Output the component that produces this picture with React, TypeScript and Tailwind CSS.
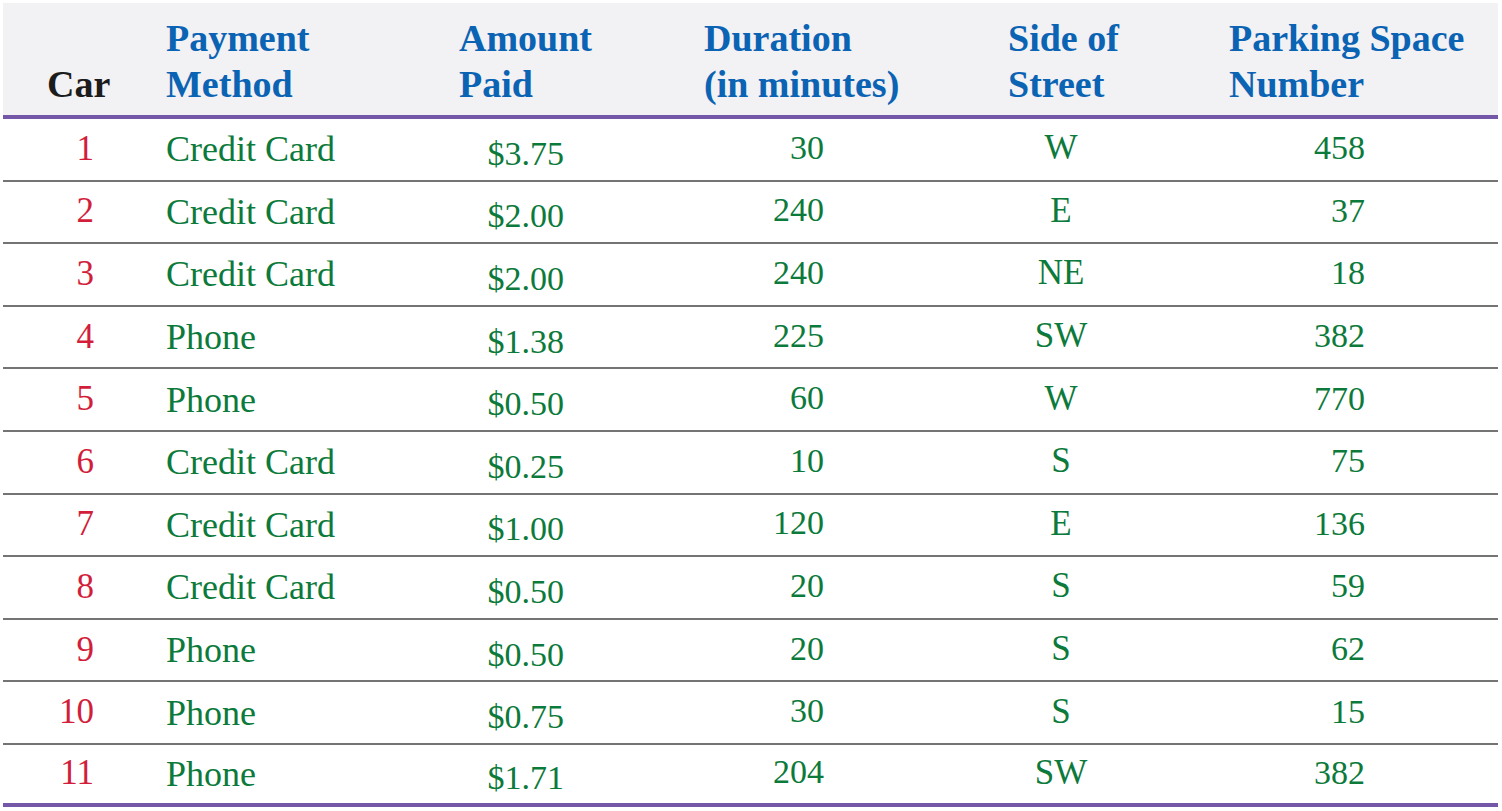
const rows = [
  { car: '1', method: 'Credit Card', amount: '$3.75', duration: '30', side: 'W', space: '458' },
  { car: '2', method: 'Credit Card', amount: '$2.00', duration: '240', side: 'E', space: '37' },
  { car: '3', method: 'Credit Card', amount: '$2.00', duration: '240', side: 'NE', space: '18' },
  { car: '4', method: 'Phone', amount: '$1.38', duration: '225', side: 'SW', space: '382' },
  { car: '5', method: 'Phone', amount: '$0.50', duration: '60', side: 'W', space: '770' },
  { car: '6', method: 'Credit Card', amount: '$0.25', duration: '10', side: 'S', space: '75' },
  { car: '7', method: 'Credit Card', amount: '$1.00', duration: '120', side: 'E', space: '136' },
  { car: '8', method: 'Credit Card', amount: '$0.50', duration: '20', side: 'S', space: '59' },
  { car: '9', method: 'Phone', amount: '$0.50', duration: '20', side: 'S', space: '62' },
  { car: '10', method: 'Phone', amount: '$0.75', duration: '30', side: 'S', space: '15' },
  { car: '11', method: 'Phone', amount: '$1.71', duration: '204', side: 'SW', space: '382' },
];

const cols = 'grid grid-cols-[157px_293px_247px_300px_222px_276px]';

export default function App() {
  return (
    <div className="bg-white w-[1502px] h-[811px] p-[3px] font-['Liberation_Serif','Times_New_Roman',serif]">
      <div className="w-[1495px]">
        {/* header */}
        <div
          className={`${cols} items-end h-[116px] pb-[8px] bg-[#f2f1f4] border-b-4 border-[#7457a6] text-[38px] leading-[46px] font-bold text-[#0b63b3]`}
        >
          <div className="pl-[44px] text-[#1c1c1c]">Car</div>
          <div className="pl-[6px]">Payment<br />Method</div>
          <div className="pl-[6px]">Amount<br />Paid</div>
          <div className="pl-[4px]">Duration<br />(in minutes)</div>
          <div className="pl-[8px]">Side of<br />Street</div>
          <div className="pl-[7px] whitespace-nowrap">Parking Space<br />Number</div>
        </div>

        {/* body */}
        {rows.map((r, i) => {
          const last = i === rows.length - 1;
          return (
            <div
              key={r.car}
              className={`${cols} items-center text-[#0b7a3b] leading-none ${
                last ? 'h-[61.8px] border-b-4 border-[#7457a6]' : 'h-[62.6px] border-b-2 border-[#747474]'
              }`}
            >
              <div className="pr-[66px] text-right text-[35px] text-[#d21e3b] mb-[2px]">{r.car}</div>
              <div className="pl-[6px] text-[36px]">{r.method}</div>
              <div className="pr-[136px] text-right text-[34px] pt-[9px]">{r.amount}</div>
              <div className="pr-[176px] text-right text-[34px] mb-[3px]">{r.duration}</div>
              <div className="pr-[100px] text-center text-[35px] mb-[3px]">{r.side}</div>
              <div className="pr-[133px] text-right text-[34px] mb-[2px]">{r.space}</div>
            </div>
          );
        })}
      </div>
    </div>
  );
}
